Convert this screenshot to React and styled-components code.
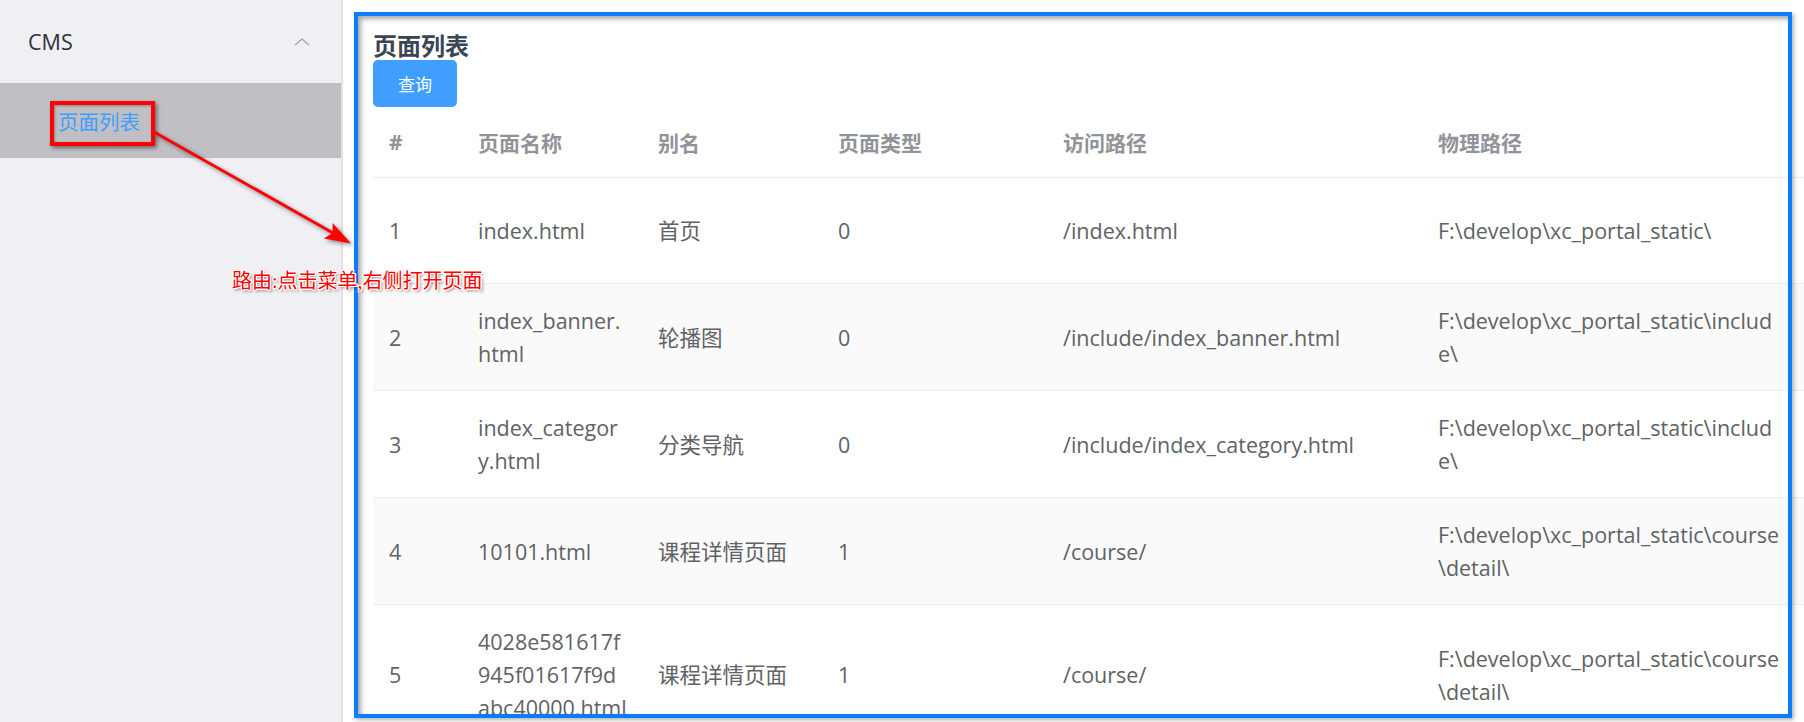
import React from 'react';
import styled, { createGlobalStyle } from 'styled-components';

const GlobalStyle = createGlobalStyle`
  html, body { margin: 0; padding: 0; background: #fff; }
  body { font-family: "Open Sans", "Noto Sans CJK SC", sans-serif; }
  * { box-sizing: border-box; }
`;

const Shell = styled.div`
  position: relative;
  display: flex;
  height: 722px;
  overflow: hidden;
`;

const Sidebar = styled.aside`
  flex: 0 0 343px;
  background: #efeff4;
  border-right: 2px solid #e2e2e6;
`;

const MenuTitle = styled.div`
  display: flex;
  align-items: center;
  justify-content: space-between;
  height: 83px;
  padding: 0 31px 0 28px;
  font-size: 21.5px;
  color: #303133;
`;

const SubItem = styled.div`
  display: flex;
  align-items: center;
  height: 75px;
  padding-left: 58px;
  background: ${p => (p.$active ? '#bfbfc4' : 'transparent')};
  color: ${p => (p.$active ? '#409eff' : '#303133')};
  font-size: 20.5px;
`;

const Main = styled.main`
  flex: 1;
  min-width: 0;
  padding: 32px 0 0 30px;
  overflow: hidden;
`;

const PageTitle = styled.h3`
  margin: 0;
  font-size: 24px;
  line-height: 28px;
  font-weight: 700;
  color: #3b4654;
`;

const QueryButton = styled.button`
  display: block;
  width: 84px;
  height: 47px;
  padding: 0;
  border: none;
  border-radius: 5px;
  background: #409eff;
  color: #fff;
  font-family: inherit;
  font-size: 17px;
`;

const DataTable = styled.table`
  width: 1431px;
  table-layout: fixed;
  border-collapse: separate;
  border-spacing: 0;
`;

const HeadRow = styled.tr`
  height: 71px;
`;

const HeadCell = styled.th`
  padding: 0 16px;
  text-align: left;
  font-size: 21px;
  font-weight: 700;
  color: #909399;
  border-bottom: 1px solid #ebeef5;
`;

const BodyRow = styled.tr`
  height: 106px;
  background: ${p => (p.$striped ? '#fafafa' : '#fff')};
`;

const Cell = styled.td`
  padding: 20px 16px;
  vertical-align: middle;
  font-size: 21.5px;
  line-height: 33px;
  color: #606266;
  white-space: pre;
  border-bottom: 1px solid #ebeef5;
`;

const Highlight = styled.div`
  position: absolute;
  left: 50px;
  top: 101px;
  width: 105px;
  height: 45px;
  border: 4px solid #ff0000;
  box-shadow: 2px 2px 4px rgba(0, 0, 0, 0.45), inset 1px 1px 3px rgba(0, 0, 0, 0.3);
  pointer-events: none;
`;

const ArrowLayer = styled.svg`
  position: absolute;
  left: 0;
  top: 0;
  filter: drop-shadow(2px 2px 2px rgba(0, 0, 0, 0.45));
  pointer-events: none;
`;

const Callout = styled.div`
  position: absolute;
  left: 232px;
  top: 269px;
  font-family: "Liberation Serif", "Noto Sans CJK SC", serif;
  font-size: 20px;
  line-height: 25px;
  color: #ff0000;
  white-space: nowrap;
  text-shadow: 1px 0 0 #fff, -1px 0 0 #fff, 0 1px 0 #fff, 0 -1px 0 #fff,
    1px 1px 0 #fff, -1px -1px 0 #fff, 1px -1px 0 #fff, -1px 1px 0 #fff,
    2px 2px 3px rgba(0, 0, 0, 0.55);
  z-index: 3;
`;

const FocusFrame = styled.div`
  position: absolute;
  left: 354px;
  top: 12px;
  width: 1438px;
  height: 706px;
  border: 4px solid #0b7dfc;
  box-shadow: inset 3px 3px 5px rgba(0, 0, 0, 0.35), 2px 2px 4px rgba(0, 0, 0, 0.3);
  pointer-events: none;
  z-index: 2;
`;

const Chevron = () => (
  <svg width="16" height="10" viewBox="0 0 16 10">
    <polyline points="1,8 8,2 15,8" fill="none" stroke="#a0a3aa" strokeWidth="1.3" />
  </svg>
);

const columns = [
  { key: 'id', title: '#', width: 89 },
  { key: 'name', title: '页面名称', width: 180 },
  { key: 'alias', title: '别名', width: 180 },
  { key: 'type', title: '页面类型', width: 225 },
  { key: 'url', title: '访问路径', width: 375 },
  { key: 'path', title: '物理路径', width: 382 },
];

const includePath = 'F:\\develop\\xc_portal_static\\includ\ne\\';
const coursePath = 'F:\\develop\\xc_portal_static\\course\n\\detail\\';

const pages = [
  { id: 1, name: 'index.html', alias: '首页', type: 0, url: '/index.html', path: 'F:\\develop\\xc_portal_static\\' },
  { id: 2, name: 'index_banner.\nhtml', alias: '轮播图', type: 0, url: '/include/index_banner.html', path: includePath },
  { id: 3, name: 'index_categor\ny.html', alias: '分类导航', type: 0, url: '/include/index_category.html', path: includePath },
  { id: 4, name: '10101.html', alias: '课程详情页面', type: 1, url: '/course/', path: coursePath },
  { id: 5, name: '4028e581617f\n945f01617f9d\nabc40000.html', alias: '课程详情页面', type: 1, url: '/course/', path: coursePath },
];

export default function App() {
  return (
    <Shell>
      <GlobalStyle />
      <Sidebar>
        <MenuTitle>
          <span>CMS</span>
          <Chevron />
        </MenuTitle>
        <SubItem $active>页面列表</SubItem>
      </Sidebar>
      <Main>
        <PageTitle>页面列表</PageTitle>
        <QueryButton>查询</QueryButton>
        <DataTable>
          <colgroup>
            {columns.map(c => <col key={c.key} style={{ width: c.width }} />)}
          </colgroup>
          <thead>
            <HeadRow>
              {columns.map(c => <HeadCell key={c.key}>{c.title}</HeadCell>)}
            </HeadRow>
          </thead>
          <tbody>
            {pages.map((row, i) => (
              <BodyRow key={row.id} $striped={i % 2 === 1}>
                {columns.map(c => <Cell key={c.key}>{row[c.key]}</Cell>)}
              </BodyRow>
            ))}
          </tbody>
        </DataTable>
      </Main>

      <FocusFrame />
      <Highlight />
      <ArrowLayer width="370" height="260" viewBox="0 0 370 260">
        <line x1="154" y1="132" x2="333" y2="233" stroke="#ff0000" strokeWidth="3" />
        <polygon points="351,243.5 323.8,238.5 332.6,233.1 332.6,222.9" fill="#ff0000" />
      </ArrowLayer>
      <Callout>路由:点击菜单,右侧打开页面</Callout>
    </Shell>
  );
}
